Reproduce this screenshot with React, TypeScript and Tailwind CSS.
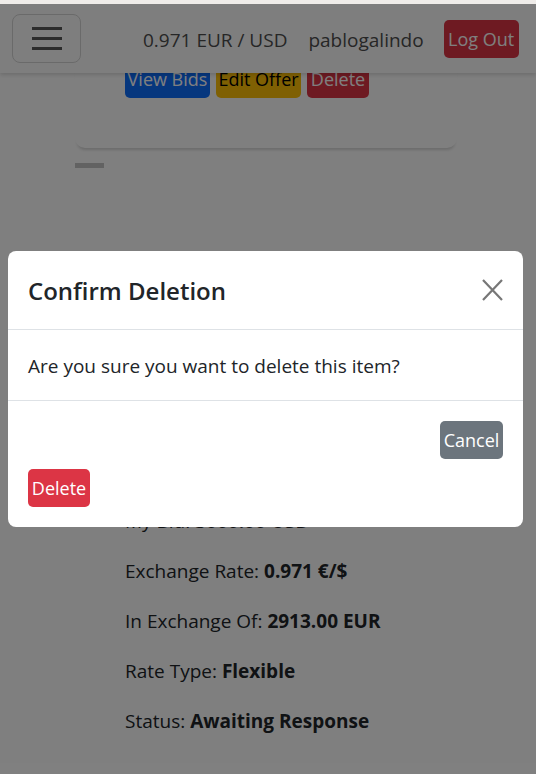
import React from "react";

const font = "font-['Segoe_UI','Open_Sans','Noto_Sans',sans-serif]";

export default function App() {
  return (
    <div className={`relative w-[536px] h-[774px] overflow-hidden bg-white text-[#212529] ${font}`}>
      {/* page content (scrolled) */}
      <div className="pt-[61px]">
        <div className="ml-[75px] w-[382px] rounded-b-[10px] bg-white shadow-[0_4px_3px_-2px_rgba(0,0,0,0.16)] pb-[50px] pl-[50px]">
          <div className="flex gap-[6px]">
            <button className="h-[37px] w-[85px] rounded-[5px] bg-[#0d6efd] text-white text-[18px]">View Bids</button>
            <button className="h-[37px] w-[85px] rounded-[5px] bg-[#ffc107] text-black text-[18px]">Edit Offer</button>
            <button className="h-[37px] w-[62px] rounded-[5px] bg-[#dc3545] text-white text-[18px]">Delete</button>
          </div>
        </div>
        <div className="ml-[75px] mt-[15px] h-[5px] w-[29px] bg-[#c4c4c4]" />
        <div className="ml-[125px] mt-[339px] flex flex-col gap-[21px] text-[19px] leading-[29px]">
          <p>My Bid: <b>3000.00 USD</b></p>
          <p>Exchange Rate: <b>0.971 €/$</b></p>
          <p>In Exchange Of: <b>2913.00 EUR</b></p>
          <p>Rate Type: <b>Flexible</b></p>
          <p>Status: <b>Awaiting Response</b></p>
        </div>
      </div>

      {/* navbar */}
      <nav className="absolute left-0 right-0 top-[4px] h-[69px] bg-[#fdfdfd] shadow-[0_2px_4px_rgba(0,0,0,0.15)] flex items-center">
        <button className="ml-[12px] h-[49px] w-[69px] rounded-[8px] border border-[#d4d4d4] flex flex-col items-center justify-center gap-[7px]">
          <span className="block h-[3px] w-[30px] bg-[#595959]" />
          <span className="block h-[3px] w-[30px] bg-[#595959]" />
          <span className="block h-[3px] w-[30px] bg-[#595959]" />
        </button>
        <span className="ml-[62px] pt-[3px] text-[19px] text-[#4d4d4d]">0.971 EUR / USD</span>
        <span className="ml-[21px] pt-[3px] text-[19px] text-[#4d4d4d]">pablogalindo</span>
        <button className="ml-[20px] mt-[1px] h-[38px] w-[75px] rounded-[5px] bg-[#dc3545] text-white text-[18px]">Log Out</button>
      </nav>

      {/* backdrop */}
      <div className="absolute inset-0 bg-black/50" />

      {/* top strip */}
      <div className="absolute left-0 right-0 top-0 h-[4px] bg-[#efece9]" />

      {/* modal */}
      <div className="absolute left-[8px] top-[251px] w-[515px] rounded-[8px] bg-white">
        <div className="flex h-[79px] items-center justify-between border-b border-[#dee2e6] px-[20px]">
          <h5 className="pt-[2px] text-[24px] font-semibold leading-[36px] text-[#212529]">Confirm Deletion</h5>
          <svg width="21" height="22" viewBox="0 0 21 22">
            <path d="M1 1 L20 21 M20 1 L1 21" stroke="#777" strokeWidth="2.2" strokeLinecap="butt" />
          </svg>
        </div>
        <div className="border-b border-[#dee2e6] px-[20px] pt-[21px] pb-[19px] text-[19px] leading-[30px] text-[#212529]">
          Are you sure you want to delete this item?
        </div>
        <div className="flex flex-col gap-[10px] p-[20px]">
          <button className="self-end h-[38px] w-[63px] rounded-[5px] bg-[#6c757d] text-[18px] text-white">Cancel</button>
          <button className="self-start h-[38px] w-[62px] rounded-[5px] bg-[#dc3545] text-[18px] text-white">Delete</button>
        </div>
      </div>
    </div>
  );
}
